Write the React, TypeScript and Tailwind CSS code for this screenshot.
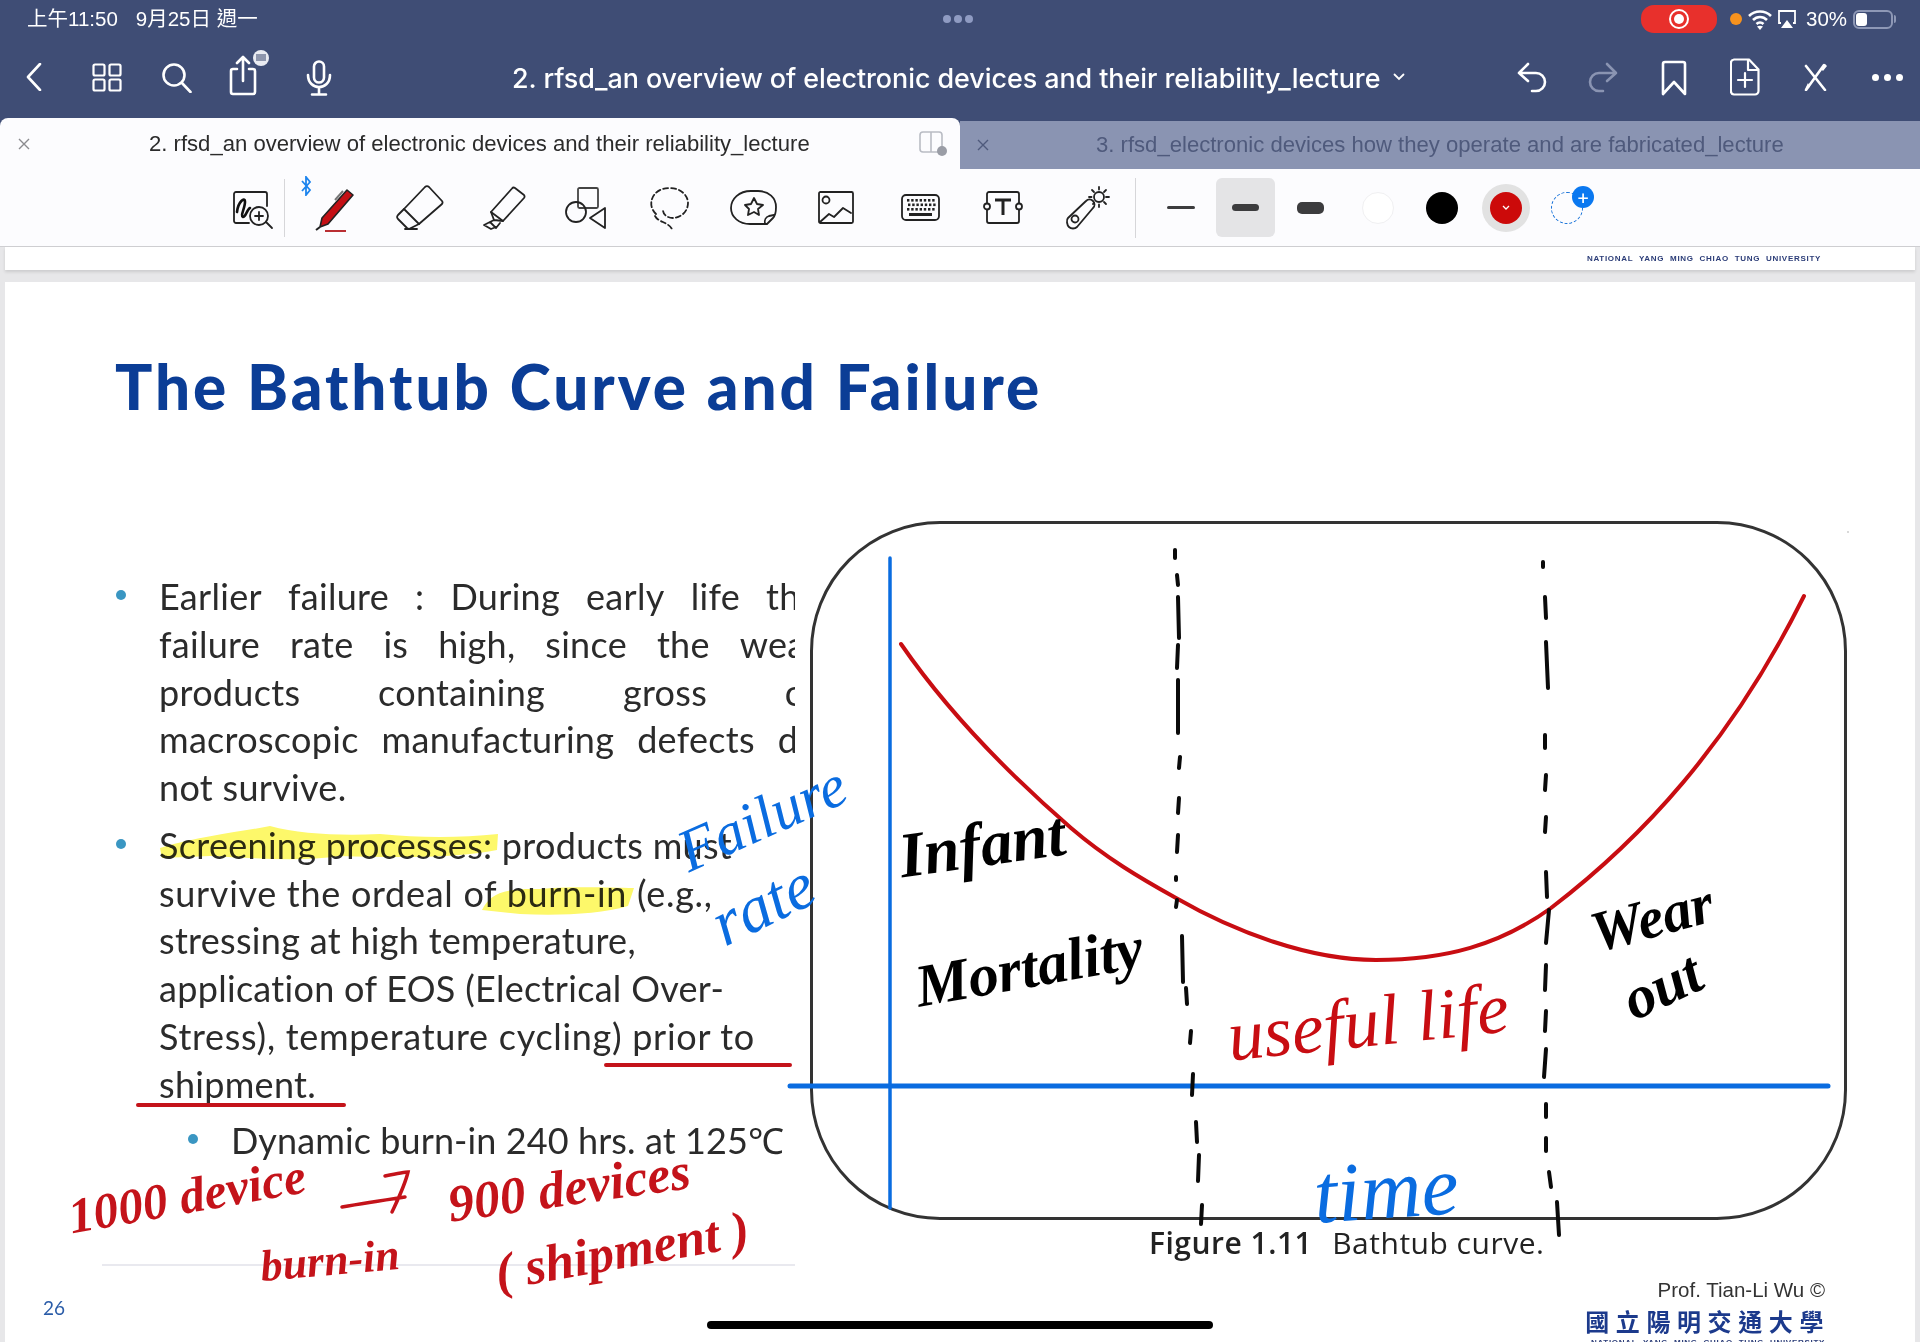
import React from "react";

const leftDash: [number, number, number, number][] = [
  [1175, 550, 1175, 558], [1177, 575, 1178, 585], [1178, 597, 1179, 638], [1178, 645, 1177, 668],
  [1178, 680, 1178, 733], [1180, 757, 1179, 768], [1179, 798, 1178, 813], [1178, 835, 1177, 852],
  [1176, 877, 1176, 880], [1177, 900, 1176, 907], [1182, 936, 1183, 982], [1186, 988, 1187, 1004],
  [1191, 1031, 1190, 1043], [1193, 1074, 1192, 1095], [1196, 1122, 1197, 1142], [1199, 1155, 1198, 1181],
  [1202, 1205, 1201, 1224],
];
const rightDash: [number, number, number, number][] = [
  [1543, 562, 1543, 567], [1545, 597, 1546, 618], [1546, 642, 1548, 688], [1545, 735, 1545, 748],
  [1546, 775, 1545, 790], [1546, 817, 1545, 832], [1546, 872, 1547, 897], [1549, 910, 1546, 943],
  [1546, 965, 1545, 990], [1546, 1011, 1545, 1031], [1546, 1049, 1544, 1077], [1546, 1104, 1546, 1117],
  [1546, 1138, 1546, 1151], [1549, 1172, 1551, 1187], [1557, 1202, 1559, 1235],
];

const s = { fill: "none", stroke: "#222", strokeWidth: 1.8, strokeLinecap: "round" as const, strokeLinejoin: "round" as const };
const w = { fill: "none", stroke: "#fff", strokeWidth: 2.6, strokeLinecap: "round" as const, strokeLinejoin: "round" as const };

function HandZoom() {
  return (
    <svg width="42" height="40" viewBox="0 0 42 40" className="ml-[232px] mt-[4px] shrink-0">
      <path d="M17 33H4a2 2 0 0 1-2-2V4a2 2 0 0 1 2-2h29a2 2 0 0 1 2 2v12" {...s} />
      <path d="M5 22C6 12 13 6 13 12c0 6-5 14-2 15 3 0 4-8 7-9" fill="none" stroke="#111" strokeWidth="2.6" strokeLinecap="round" />
      <circle cx="27" cy="26" r="9" {...s} />
      <path d="M27 22v8M23 26h8M34 32l6 6" {...s} />
    </svg>
  );
}
function Pen() {
  return (
    <svg width="44" height="46" viewBox="0 0 44 46" className="mt-[2px] shrink-0">
      <path d="M9 32L34 4l6 5L15 38l-8 3z" fill="#c40f14" stroke="#222" strokeWidth="1.6" strokeLinejoin="round" />
      <path d="M30 5l-8 9" stroke="#777" strokeWidth="2" fill="none" />
      <path d="M12 45h21" stroke="#b3181c" strokeWidth="1.8" />
      <path d="M3 44l4-3" stroke="#222" strokeWidth="2" />
    </svg>
  );
}
function Eraser() {
  return (
    <svg width="48" height="46" viewBox="0 0 48 46" className="shrink-0">
      <path d="M33 2l13 14a2.5 2.5 0 0 1 0 3L23 39 8 24 29 2a3 3 0 0 1 4 0z" {...s} />
      <path d="M8 24l-6 6a3 3 0 0 0 0 4l9 9a3 3 0 0 0 4 0l8-4" {...s} />
      <path d="M9 44h12" {...s} />
    </svg>
  );
}
function Highlighter() {
  return (
    <svg width="44" height="44" viewBox="0 0 44 44" className="shrink-0">
      <path d="M33 2l9 7a2.5 2.5 0 0 1 0 3L21 35l-12-9L30 2.5a2.2 2.2 0 0 1 3-.5z" {...s} />
      <path d="M9 26l3 8 9 1M12 34l-4 2 6 6 4-5M8 36l-6 3 7 4 5-2" {...s} />
    </svg>
  );
}
function Shapes() {
  return (
    <svg width="42" height="42" viewBox="0 0 42 42" className="shrink-0">
      <rect x="13" y="1" width="20" height="20" rx="1.5" {...s} stroke="#444" />
      <circle cx="11" cy="25" r="10" {...s} />
      <path d="M40 21v20l-15-10z" {...s} />
    </svg>
  );
}
function Lasso() {
  return (
    <svg width="40" height="44" viewBox="0 0 40 44" className="shrink-0">
      <path d="M6 28C0 22 1 16 2 13 5 5 12 2 20 2c10 0 18 7 18 15 0 9-8 15-15 15-5 0-10-3-10-8M5 30c3 6 13 6 17 13" {...s} strokeDasharray="5 3" />
    </svg>
  );
}
function Stamp() {
  return (
    <svg width="47" height="36" viewBox="0 0 47 36" className="shrink-0">
      <path d="M37 34H20C9 34 1 27 1 18S9 1 21 1h7c11 0 18 7 18 16 0 5-1 9-3 11z" {...s} />
      <path d="M35 34c-1-4 1-7 4-8l5-1" {...s} />
      <path d="M24 8l3 6 6 1-5 4 1 6-5-3-6 3 1-6-4-4 6-1z" {...s} />
    </svg>
  );
}
function ImageIco() {
  return (
    <svg width="36" height="33" viewBox="0 0 36 33" className="shrink-0">
      <rect x="1" y="1" width="34" height="31" rx="1.5" {...s} />
      <circle cx="8" cy="9" r="3.5" {...s} />
      <path d="M2 31l9-8 5 3 9-9 8 5" {...s} />
    </svg>
  );
}
function Keyboard() {
  const keys: React.ReactNode[] = [];
  for (let r = 0; r < 3; r++)
    for (let c = 0; c < 7; c++)
      keys.push(<rect key={`${r}-${c}`} x={6 + c * 4.2 + (r === 1 ? 1 : 0)} y={5 + r * 4.5} width="2.4" height="2.6" fill="#222" />);
  return (
    <svg width="39" height="27" viewBox="0 0 39 27" className="shrink-0">
      <rect x="1" y="1" width="37" height="25" rx="4" {...s} />
      {keys}
      <rect x="8" y="19" width="23" height="3" fill="#222" />
    </svg>
  );
}
function TextBox() {
  return (
    <svg width="40" height="33" viewBox="0 0 40 33" className="shrink-0">
      <path d="M4 12V3a2 2 0 0 1 2-2h28a2 2 0 0 1 2 2v9M4 19v11a2 2 0 0 0 2 2h28a2 2 0 0 0 2-2V19" {...s} />
      <circle cx="4" cy="15.5" r="3" {...s} />
      <circle cx="36" cy="15.5" r="3" {...s} />
      <path d="M12 9h16M20 9v15" fill="none" stroke="#222" strokeWidth="3" />
    </svg>
  );
}
function Laser() {
  return (
    <svg width="46" height="44" viewBox="0 0 46 44" className="shrink-0">
      <path d="M3 32l18-17c2-2 5-2 7 0s2 5 0 7L12 41c-2 2-6 2-8 0s-3-7-1-9z" {...s} />
      <circle cx="10" cy="33" r="3.5" {...s} />
      <circle cx="34" cy="11" r="5" {...s} />
      <path d="M34 1v2.5M34 18.500v2.500M44 11h-3M24 11h2.500M41 4l-2 2M41 18l-2-2M27 4l2 2M28 18l1-1" {...s} />
    </svg>
  );
}

function Ink({ className, children }: { className: string; children: React.ReactNode }) {
  return (
    <span className={`absolute -translate-x-1/2 -translate-y-1/2 whitespace-nowrap italic font-['Liberation_Serif',serif] leading-none ${className}`}>
      {children}
    </span>
  );
}

function Line({ words }: { words: string[] }) {
  return (
    <div className="flex h-[47.8px] w-[660px] items-center justify-between">
      {words.map((x, i) => (
        <span key={i}>{x}</span>
      ))}
    </div>
  );
}
function Plain({ children, className = "" }: { children: React.ReactNode; className?: string }) {
  return <div className={`h-[47.8px] flex items-center whitespace-pre ${className}`}>{children}</div>;
}

export default function App() {
  return (
    <div className="relative flex h-[1342px] w-[1920px] flex-col overflow-hidden bg-[#e7e7e9] font-['Inter','Liberation_Sans',sans-serif]">
      {/* header */}
      <header className="h-[121px] shrink-0 bg-[#3f4d75] text-white">
        <div className="relative flex h-[38px] items-center">
          <span className="ml-[27px] text-[20.5px] font-['Liberation_Sans','Noto_Sans_CJK_TC',sans-serif]">上午11:50</span>
          <span className="ml-[18px] text-[20.5px] font-['Liberation_Sans','Noto_Sans_CJK_TC',sans-serif]">9月25日 週一</span>
          <div className="absolute left-[943px] top-[15px] flex gap-[3px]">
            <span className="h-[8px] w-[8px] rounded-full bg-[#8f9bc2]" />
            <span className="h-[8px] w-[8px] rounded-full bg-[#8f9bc2]" />
            <span className="h-[8px] w-[8px] rounded-full bg-[#8f9bc2]" />
          </div>
          <div className="absolute left-[1641px] top-[5px] flex h-[28px] w-[76px] items-center justify-center rounded-[13px] bg-[#e8302c]">
            <span className="flex h-[20px] w-[20px] items-center justify-center rounded-full border-2 border-white">
              <span className="h-[10px] w-[10px] rounded-full bg-white" />
            </span>
          </div>
          <span className="absolute left-[1730px] top-[13px] h-[12px] w-[12px] rounded-full bg-[#f6921e]" />
          <svg width="24" height="24" viewBox="0 0 24 24" className="absolute left-[1748px] top-[7px]">
            <path d="M1 9c6-6 16-6 22 0M5 13c4-4 10-4 14 0M8.500 17c2-2 5-2 7 0" fill="none" stroke="#fff" strokeWidth="2.6" />
            <path d="M12 23l3-3.500c-2-1-4-1-6 0z" fill="#fff" />
          </svg>
          <svg width="20" height="20" viewBox="0 0 20 20" className="absolute left-[1777px] top-[9px]">
            <path d="M4 14H2V2h16v12h-2" fill="none" stroke="#fff" strokeWidth="1.8" />
            <path d="M10 11l6 8H4z" fill="#fff" />
          </svg>
          <span className="absolute left-[1806px] top-[7px] text-[20.5px] leading-[24px] font-['Liberation_Sans',sans-serif]">30%</span>
          <div className="absolute left-[1853px] top-[10px] h-[19px] w-[40px] rounded-[6px] border-2 border-[#8e98b6] p-[1px]">
            <div className="h-full w-[11px] rounded-[3px] bg-white" />
          </div>
          <span className="absolute left-[1894px] top-[15px] h-[8px] w-[2px] rounded-r bg-[#8e98b6]" />
        </div>
        <div className="flex h-[83px] items-start pt-[12px]">
          <svg width="16" height="28" viewBox="0 0 16 28" className="ml-[26px] mt-[13px] shrink-0">
            <path d="M14 1L2 14l12 13" {...w} />
          </svg>
          <svg width="30" height="29" viewBox="0 0 30 29" className="ml-[50px] mt-[13px] shrink-0">
            <rect x="1.500" y="1.500" width="11" height="11" rx="1.500" {...w} strokeWidth="2.200" />
            <rect x="17.500" y="1.500" width="11" height="11" rx="1.500" {...w} strokeWidth="2.200" />
            <rect x="1.500" y="16.500" width="11" height="11" rx="1.500" {...w} strokeWidth="2.200" />
            <rect x="17.500" y="16.500" width="11" height="11" rx="1.500" {...w} strokeWidth="2.200" />
          </svg>
          <svg width="30" height="30" viewBox="0 0 30 30" className="ml-[40px] mt-[13px] shrink-0">
            <circle cx="12" cy="12" r="10.500" {...w} />
            <path d="M20 20l8.500 9" {...w} />
          </svg>
          <svg width="42" height="46" viewBox="0 0 42 46" className="ml-[37px] shrink-0">
            <path d="M8 19H4a2 2 0 0 0-2 2v21a2 2 0 0 0 2 2h20a2 2 0 0 0 2-2V21a2 2 0 0 0-2-2h-4M14 31V8M8 13l6-6 6 6" {...w} />
            <circle cx="32" cy="8" r="8" fill="#e9ebf2" />
            <rect x="27" y="4" width="10" height="7" fill="#8e96ad" />
          </svg>
          <svg width="26" height="36" viewBox="0 0 26 36" className="ml-[35px] mt-[10px] shrink-0">
            <rect x="8" y="1.500" width="10" height="21" rx="5" {...w} />
            <path d="M2 15c0 16 22 16 22 0M13 27v7M6 34.500h14" {...w} />
          </svg>
          <div className="ml-[180px] mt-[5px] flex h-[46px] w-[881px] shrink-0 items-center text-[26.9px] font-medium whitespace-nowrap tracking-[-0.05px]">
            2. rfsd_an overview of electronic devices and their reliability_lecture
          </div>
          <svg width="12" height="8" viewBox="0 0 12 8" className="mt-[23px] shrink-0">
            <path d="M1.500 1.500L6 6l4.500-4.500" fill="none" stroke="#fff" strokeWidth="1.800" strokeLinecap="round" />
          </svg>
          <svg width="30" height="32" viewBox="0 0 30 32" className="ml-[112px] mt-[12px] shrink-0">
            <path d="M11 2L2 11l9 8M2 11h17a9 9 0 0 1 9 9c0 5-4 9-9 9h-4" {...w} />
          </svg>
          <svg width="30" height="32" viewBox="0 0 30 32" className="ml-[41px] mt-[12px] shrink-0">
            <path d="M19 2l9 9-9 8M28 11H11a9 9 0 0 0-9 9c0 5 4 9 9 9h4" {...w} stroke="#8a94b2" />
          </svg>
          <svg width="26" height="36" viewBox="0 0 26 36" className="ml-[43px] mt-[10px] shrink-0">
            <path d="M2 34V4a2 2 0 0 1 2-2h18a2 2 0 0 1 2 2v30l-11-12z" {...w} />
          </svg>
          <svg width="30" height="38" viewBox="0 0 30 38" className="ml-[43px] mt-[8px] shrink-0">
            <path d="M4 1.500h15l9.500 10V33a3.500 3.500 0 0 1-3.500 3.500H4A3.500 3.500 0 0 1 .9 33V5A3.500 3.500 0 0 1 4 1.500zM18 2v10h10M15 15v14M8 22h14" {...w} strokeWidth="2.200" />
          </svg>
          <svg width="26" height="28" viewBox="0 0 26 28" className="ml-[42px] mt-[13px] shrink-0">
            <path d="M4 3l19 24M22 2L4 27" {...w} />
            <path d="M19 6l4-5 2 2-4 5zM6 20l-3 6 5-2z" fill="#fff" />
          </svg>
          <div className="ml-[44px] mt-[24px] flex gap-[5px]">
            <span className="h-[7px] w-[7px] rounded-full bg-white" />
            <span className="h-[7px] w-[7px] rounded-full bg-white" />
            <span className="h-[7px] w-[7px] rounded-full bg-white" />
          </div>
        </div>
      </header>

      {/* tabs */}
      <div className="flex h-[48px] shrink-0 items-end bg-[#3f4d75] font-['Liberation_Sans',sans-serif]">
        <div className="flex h-[51px] w-[960px] shrink-0 items-center rounded-t-[8px] bg-[#fcfcfe] text-[22.1px] text-[#2b2b2b]">
          <svg width="12" height="12" viewBox="0 0 12 12" className="ml-[18px] shrink-0">
            <path d="M1 1l10 10M11 1L1 11" stroke="#8b8b8f" strokeWidth="1.400" />
          </svg>
          <span className="ml-[119px] whitespace-nowrap">2. rfsd_an overview of electronic devices and their reliability_lecture</span>
          <svg width="28" height="26" viewBox="0 0 28 26" className="ml-[109px] shrink-0">
            <rect x="1" y="1" width="22" height="20" rx="3" fill="none" stroke="#b9bcc4" strokeWidth="1.600" />
            <path d="M12 1v20" stroke="#b9bcc4" strokeWidth="1.600" />
            <circle cx="23" cy="20" r="5" fill="#9a9da6" />
          </svg>
        </div>
        <div className="flex h-[48px] w-[960px] shrink-0 items-center bg-[#8a94b2] text-[22.1px] text-[#4f5a7c]">
          <svg width="12" height="12" viewBox="0 0 12 12" className="ml-[17px] shrink-0">
            <path d="M1 1l10 10M11 1L1 11" stroke="#4f5a7c" strokeWidth="1.400" />
          </svg>
          <span className="ml-[107px] whitespace-nowrap">3. rfsd_electronic devices how they operate and are fabricated_lecture</span>
        </div>
      </div>

      {/* tool row */}
      <div className="flex h-[78px] shrink-0 items-center border-b border-[#cfcfd2] bg-[#fcfcfe]">
        <HandZoom />
        <span className="ml-[10px] h-[58px] w-px bg-[#d6d6d9]" />
        <svg width="12" height="20" viewBox="0 0 12 20" className="ml-[15px] mb-[44px] shrink-0">
          <path d="M2 5l8 9-4 5V1l4 5-8 9" fill="none" stroke="#1c84ee" strokeWidth="1.800" />
        </svg>
        <div className="ml-[1px]"><Pen /></div>
        <div className="ml-[39px]"><Eraser /></div>
        <div className="ml-[38px]"><Highlighter /></div>
        <div className="ml-[39px]"><Shapes /></div>
        <div className="ml-[43px]"><Lasso /></div>
        <div className="ml-[40px]"><Stamp /></div>
        <div className="ml-[41px]"><ImageIco /></div>
        <div className="ml-[47px]"><Keyboard /></div>
        <div className="ml-[43px]"><TextBox /></div>
        <div className="ml-[42px]"><Laser /></div>
        <span className="ml-[24px] h-[60px] w-px bg-[#d6d6d9]" />
        <span className="ml-[31px] h-[3px] w-[28px] rounded-full bg-[#3c3c3e]" />
        <span className="ml-[21px] flex h-[59px] w-[59px] items-center justify-center rounded-[6px] bg-[#e4e4e6]">
          <span className="h-[7px] w-[27px] rounded-full bg-[#3c3c3e]" />
        </span>
        <span className="ml-[22px] h-[12px] w-[27px] rounded-[5px] bg-[#3c3c3e]" />
        <span className="ml-[38px] h-[32px] w-[32px] rounded-full border border-[#f0f0f2] bg-white" />
        <span className="ml-[32px] h-[32px] w-[32px] rounded-full bg-black" />
        <span className="ml-[24px] flex h-[48px] w-[48px] items-center justify-center rounded-full bg-[#e2e2e2]">
          <span className="flex h-[32px] w-[32px] items-center justify-center rounded-full bg-[#cc0a0a]">
            <svg width="8" height="6" viewBox="0 0 8 6">
              <path d="M1 1l3 3 3-3" fill="none" stroke="#fff" strokeWidth="1.300" />
            </svg>
          </span>
        </span>
        <span className="relative ml-[21px] h-[32px] w-[32px] rounded-full border-[1.5px] border-dashed border-[#1470d8]">
          <span className="absolute left-[20px] top-[-7px] flex h-[22px] w-[22px] items-center justify-center rounded-full bg-[#0a78f0] text-[20px] leading-none text-white">+</span>
        </span>
      </div>

      {/* previous page end */}
      <div className="mx-[5px] flex h-[23px] shrink-0 items-center justify-end bg-white pr-[94px] shadow-[0_2px_3px_rgba(0,0,0,0.12)]">
        <span className="text-[8px] font-bold tracking-[0.7px] text-[#2c3d78] font-['Liberation_Sans',sans-serif]">
          NATIONAL&nbsp; YANG&nbsp; MING&nbsp; CHIAO&nbsp; TUNG&nbsp; UNIVERSITY
        </span>
      </div>

      {/* slide */}
      <main className="relative mx-[5px] mt-[12px] flex-1 overflow-hidden bg-white font-['Lato','Noto_Sans',sans-serif]">
        <h1 className="pl-[110px] pt-[68px] text-[62px] font-black leading-[72px] tracking-[3px] text-[#0b3d96]">
          The Bathtub Curve and Failure
        </h1>
        <div className="flex items-start">
          <div className="mt-[150px] w-[790px] shrink-0 overflow-hidden pl-[154px] text-[36px] tracking-[0.3px] text-[#2b2b2b]">
            <div className="relative">
              <span className="absolute left-[-43px] top-[18px] h-[10px] w-[10px] rounded-full bg-[#3a96c2]" />
              <Line words={["Earlier", "failure", ":", "During", "early", "life", "the"]} />
              <Line words={["failure", "rate", "is", "high,", "since", "the", "wear"]} />
              <Line words={["products", "containing", "gross", "or"]} />
              <Line words={["macroscopic", "manufacturing", "defects", "do"]} />
              <Plain>not survive.</Plain>
            </div>
            <div className="relative mt-[10px]">
              <span className="absolute left-[-43px] top-[18px] h-[10px] w-[10px] rounded-full bg-[#3a96c2]" />
              <Plain>Screening processes: products must</Plain>
              <Plain className="tracking-[0.7px]">survive the ordeal of burn-in (e.g.,</Plain>
              <Plain>stressing at high temperature,</Plain>
              <Plain>application of EOS (Electrical Over-</Plain>
              <Plain className="tracking-[0.7px]">Stress), temperature cycling) prior to</Plain>
              <Plain>shipment.</Plain>
            </div>
            <div className="relative mt-[8px] pl-[72px] text-[36px] tracking-[0.1px]">
              <span className="absolute left-[29px] top-[18px] h-[10px] w-[10px] rounded-full bg-[#3a96c2]" />
              <Plain>Dynamic burn-in 240 hrs. at 125℃</Plain>
            </div>
          </div>
          <div className="ml-[15px] mt-[99px] shrink-0">
            <div className="h-[699px] w-[1037px] rounded-[130px] border-[3.5px] border-[#333]" />
            <div className="ml-[339px] mt-[3px] whitespace-nowrap text-[30px] leading-[40px] tracking-[0.5px] text-[#222] font-['Open_Sans',sans-serif]">
              <span className="font-semibold">Figure 1.11</span>
              <span className="ml-[20px]">Bathtub curve.</span>
            </div>
          </div>
        </div>
        <div className="absolute bottom-[76px] left-[97px] h-[2px] w-[693px] bg-[#e9e9ef]" />
        <span className="absolute left-[38px] top-[1016px] text-[19px] leading-[20px] text-[#2a5ca8]">26</span>
        <div className="absolute right-[90px] top-[996px] flex flex-col items-end">
          <span className="text-[20.5px] leading-[24px] text-[#333] font-['Liberation_Sans',sans-serif]">Prof. Tian-Li Wu ©</span>
          <span className="mr-[-5px] mt-[4px] text-[24px] font-bold leading-[30px] tracking-[6.6px] text-[#1c3a8c] font-['Noto_Sans_CJK_TC',sans-serif]">國立陽明交通大學</span>
          <span className="mt-[2px] text-[8px] font-bold leading-[10px] tracking-[0.7px] text-[#2c3d78] font-['Liberation_Sans',sans-serif]">
            NATIONAL&nbsp; YANG&nbsp; MING&nbsp; CHIAO&nbsp; TUNG&nbsp; UNIVERSITY
          </span>
        </div>
      </main>

      {/* ink layer */}
      <div className="pointer-events-none absolute inset-0">
        <svg width="1920" height="1342" viewBox="0 0 1920 1342" className="absolute inset-0 mix-blend-multiply">
          <path d="M160 848C200 836 240 832 270 826C300 834 340 836 380 834C420 838 460 838 498 834L497 850C460 858 400 858 340 856C300 862 250 858 210 856L162 858z" fill="#fdf86a" />
          <path d="M482 910C490 895 500 888 540 889C580 886 610 888 634 888L628 906C600 914 560 916 520 914z" fill="#fdf86a" />
        </svg>
        <svg width="1920" height="1342" viewBox="0 0 1920 1342" className="absolute inset-0">
          <path d="M890 558V1208" stroke="#0a6ce0" strokeWidth="3.500" fill="none" strokeLinecap="round" />
          <path d="M790 1086H1828" stroke="#0a6ce0" strokeWidth="5" fill="none" strokeLinecap="round" />
          <path d="M901 644C950 715 1010 775 1071 828C1106 858 1140 878 1176 898C1235 932 1310 960 1376 960C1445 960 1500 945 1551 908C1640 840 1730 745 1804 596" stroke="#c80d12" strokeWidth="4" fill="none" strokeLinecap="round" />
          {leftDash.concat(rightDash).map((d, i) => (
            <path key={i} d={`M${d[0]} ${d[1]}L${d[2]} ${d[3]}`} stroke="#0a0a0a" strokeWidth="4" fill="none" strokeLinecap="round" />
          ))}
          <path d="M606 1065H790M138 1105H344" stroke="#c4131a" strokeWidth="4" fill="none" strokeLinecap="round" />
          <path d="M342 1207C365 1203 385 1200 405 1197M385 1176C395 1174 405 1172 408 1172C405 1185 400 1195 392 1212" stroke="#c4131a" strokeWidth="3.500" fill="none" strokeLinecap="round" />
          <circle cx="1848" cy="532" r="1" fill="#ccc" />
        </svg>
        <Ink className="left-[762px] top-[818px] rotate-[-24deg] text-[60px] text-[#0a6ce0]">Failure</Ink>
        <Ink className="left-[763px] top-[904px] rotate-[-26deg] text-[66px] text-[#0a6ce0]">rate</Ink>
        <Ink className="left-[982px] top-[845px] rotate-[-8deg] text-[64px] font-bold text-black">Infant</Ink>
        <Ink className="left-[1029px] top-[967px] rotate-[-10deg] text-[60px] font-bold text-black">Mortality</Ink>
        <Ink className="left-[1368px] top-[1022px] rotate-[-6deg] text-[72px] text-[#c80d12]">useful life</Ink>
        <Ink className="left-[1652px] top-[918px] rotate-[-15deg] text-[58px] font-bold text-black">Wear</Ink>
        <Ink className="left-[1662px] top-[986px] rotate-[-25deg] text-[60px] font-bold text-black">out</Ink>
        <Ink className="left-[1386px] top-[1190px] rotate-[-4deg] text-[84px] text-[#0a6ce0]">time</Ink>
        <Ink className="left-[187px] top-[1196px] rotate-[-10deg] text-[50px] font-bold text-[#c4131a]">1000 device</Ink>
        <Ink className="left-[569px] top-[1188px] rotate-[-8deg] text-[52px] font-bold text-[#c4131a]">900 devices</Ink>
        <Ink className="left-[330px] top-[1261px] rotate-[-5deg] text-[44px] font-bold text-[#c4131a]">burn-in</Ink>
        <Ink className="left-[622px] top-[1251px] rotate-[-10deg] text-[52px] font-bold text-[#c4131a]">( shipment )</Ink>
        <div className="absolute left-[707px] top-[1321px] h-[8px] w-[506px] rounded-full bg-black" />
      </div>
    </div>
  );
}
